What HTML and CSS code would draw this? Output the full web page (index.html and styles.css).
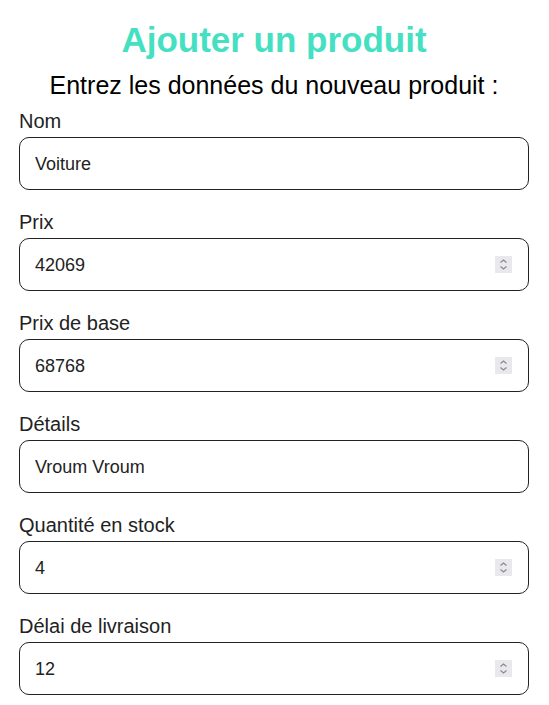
FILE: index.html
```html
<!DOCTYPE html>
<html lang="fr">
<head>
<meta charset="utf-8">
<title>Ajouter un produit</title>
<link rel="stylesheet" href="styles.css">
</head>
<body>
<main class="page">
  <h1 class="title">Ajouter un produit</h1>
  <p class="subtitle">Entrez les données du nouveau produit :</p>
  <form class="form">
    <div class="field">
      <label class="label" for="nom">Nom</label>
      <div class="control">
        <input class="input" id="nom" type="text" value="Voiture">
      </div>
    </div>
    <div class="field">
      <label class="label" for="prix">Prix</label>
      <div class="control">
        <input class="input" id="prix" type="number" value="42069">
        <span class="spin" aria-hidden="true"><svg width="17" height="17" viewBox="0 0 17 17"><path d="M5.5 6.5 L8.5 4 L11.5 6.5 M5.5 10.5 L8.5 13 L11.5 10.5" fill="none" stroke="#8a8a8e" stroke-width="1.2"/></svg></span>
      </div>
    </div>
    <div class="field">
      <label class="label" for="base">Prix de base</label>
      <div class="control">
        <input class="input" id="base" type="number" value="68768">
        <span class="spin" aria-hidden="true"><svg width="17" height="17" viewBox="0 0 17 17"><path d="M5.5 6.5 L8.5 4 L11.5 6.5 M5.5 10.5 L8.5 13 L11.5 10.5" fill="none" stroke="#8a8a8e" stroke-width="1.2"/></svg></span>
      </div>
    </div>
    <div class="field">
      <label class="label" for="details">Détails</label>
      <div class="control">
        <input class="input" id="details" type="text" value="Vroum Vroum">
      </div>
    </div>
    <div class="field">
      <label class="label" for="stock">Quantité en stock</label>
      <div class="control">
        <input class="input" id="stock" type="number" value="4">
        <span class="spin" aria-hidden="true"><svg width="17" height="17" viewBox="0 0 17 17"><path d="M5.5 6.5 L8.5 4 L11.5 6.5 M5.5 10.5 L8.5 13 L11.5 10.5" fill="none" stroke="#8a8a8e" stroke-width="1.2"/></svg></span>
      </div>
    </div>
    <div class="field">
      <label class="label" for="delai">Délai de livraison</label>
      <div class="control">
        <input class="input" id="delai" type="number" value="12">
        <span class="spin" aria-hidden="true"><svg width="17" height="17" viewBox="0 0 17 17"><path d="M5.5 6.5 L8.5 4 L11.5 6.5 M5.5 10.5 L8.5 13 L11.5 10.5" fill="none" stroke="#8a8a8e" stroke-width="1.2"/></svg></span>
      </div>
    </div>
  </form>
</main>
</body>
</html>
```
FILE: styles.css
```css
html, body {
  margin: 0;
  padding: 0;
  background: #ffffff;
}
body {
  font-family: "Liberation Sans", Arial, sans-serif;
  overflow: hidden;
}
.page {
  display: flex;
  flex-direction: column;
  padding: 0 20px 0 19px;
}
.title {
  margin: 20px 0 0;
  font-size: 35px;
  line-height: 40px;
  font-weight: bold;
  color: #45dfc2;
  text-align: center;
}
.subtitle {
  margin: 11px 0 0;
  font-size: 25px;
  line-height: 29px;
  color: #000;
  text-align: center;
}
.form {
  display: flex;
  flex-direction: column;
  gap: 21px;
  margin-top: 10px;
}
.field {
  display: flex;
  flex-direction: column;
  gap: 4px;
}
.label {
  font-size: 20px;
  line-height: 23px;
  color: #222;
}
.control {
  position: relative;
}
.input {
  display: block;
  box-sizing: border-box;
  height: 53px;
  width: 100%;
  margin: 0;
  padding: 2px 15px 0;
  border: 1px solid #222;
  border-radius: 10px;
  font-family: "Liberation Sans", Arial, sans-serif;
  font-size: 18px;
  color: #222;
  background: #fff;
  outline: none;
}
.input::-webkit-inner-spin-button,
.input::-webkit-outer-spin-button {
  -webkit-appearance: none;
  margin: 0;
}
.spin {
  position: absolute;
  right: 17px;
  top: 18px;
  width: 17px;
  height: 17px;
  background: #e9e9ed;
  pointer-events: none;
}
.spin svg {
  display: block;
}
```
